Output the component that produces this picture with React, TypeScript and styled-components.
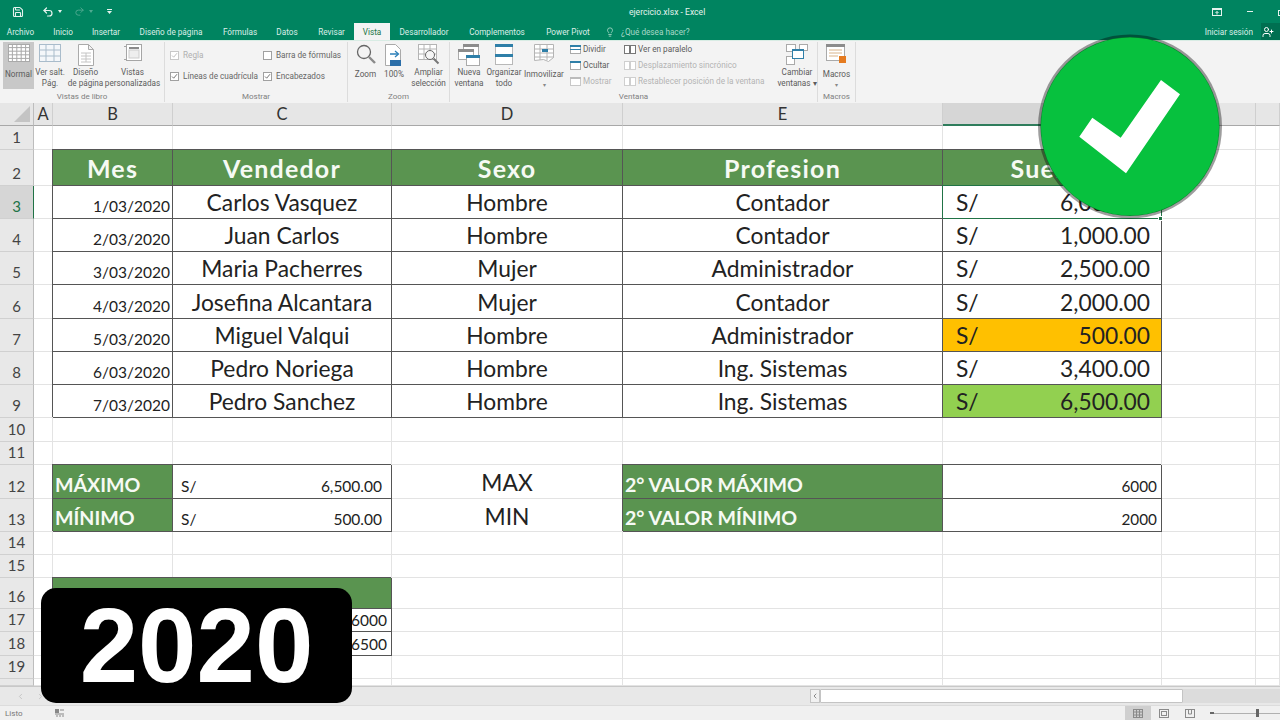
import React from 'react'
import styled, { createGlobalStyle } from 'styled-components'
import { Save, Undo2, Redo2, Lightbulb, UserPlus, ChevronLeft, ChevronRight } from 'lucide-react'

const GlobalStyle = createGlobalStyle`
  html, body { margin: 0; padding: 0; background: #fff; }
  * { box-sizing: border-box; }
`

const Page = styled.div`
  position: relative;
  width: 1280px;
  height: 720px;
  overflow: hidden;
  display: flex;
  flex-direction: column;
  font-family: Roboto, "Open Sans", sans-serif;
  color: #555;
`

const TitleBar = styled.div`
  height: 23px;
  background: #008460;
  color: #e6f3ee;
  display: flex;
  align-items: center;
  font-size: 8.6px;
`

const QuickAccess = styled.div`
  width: 629px;
  display: flex;
  align-items: center;
  padding-left: 12px;
`

const QuickIcon = styled.span<{ $ml?: number; $dim?: boolean }>`
  display: flex;
  margin-left: ${p => p.$ml ?? 0}px;
  opacity: ${p => (p.$dim ? 0.35 : 1)};
`

const Caret = styled.span<{ $ml: number; $dim?: boolean }>`
  width: 0;
  height: 0;
  margin-left: ${p => p.$ml}px;
  border: 2px solid transparent;
  border-top: 3px solid #e6f3ee;
  border-bottom: 0;
  opacity: ${p => (p.$dim ? 0.35 : 1)};
`

const WindowButtons = styled.div`
  margin-left: auto;
  display: flex;
  align-items: center;
  gap: 25px;
  margin-right: -7px;
`

const Minimize = styled.span`
  width: 6px;
  height: 1px;
  background: #e6f3ee;
`

const TabBar = styled.div`
  height: 17px;
  background: #008460;
  display: flex;
  align-items: stretch;
  font-size: 8.2px;
  color: #dcefe8;
`

const Tab = styled.div<{ $w: number; $active?: boolean }>`
  width: ${p => p.$w}px;
  display: flex;
  align-items: center;
  justify-content: center;
  white-space: nowrap;
  ${p => p.$active && 'background: #f3f3f3; color: #217346;'}
`

const Search = styled.div`
  margin-left: 5px;
  display: flex;
  align-items: center;
  gap: 6px;
  color: #a8d8c8;
`

const SignIn = styled.div`
  margin-left: auto;
  display: flex;
  align-items: center;
  white-space: nowrap;
  gap: 8px;
`

const UserBox = styled.div`
  width: 19px;
  height: 17px;
  background: #006f51;
  display: flex;
  align-items: center;
  padding-left: 1px;
`

const Ribbon = styled.div`
  height: 63px;
  background: #f3f3f3;
  display: flex;
  border-top: 1px solid #d8ece4;
  font-size: 8.2px;
  line-height: 11px;
  color: #5c5c5c;
`

const Group = styled.div<{ $w: number }>`
  width: ${p => p.$w}px;
  height: 60px;
  margin-top: 1px;
  display: flex;
  flex-direction: column;
  border-right: 1px solid #dcdcdc;
`

const GroupBody = styled.div<{ $left?: number }>`
  height: 48px;
  display: flex;
  padding-left: ${p => p.$left ?? 0}px;
`

const GroupLabel = styled.div`
  margin-top: 1px;
  text-align: center;
  font-size: 8px;
  color: #808080;
`

const LargeButton = styled.div<{ $w: number; $active?: boolean }>`
  width: ${p => p.$w}px;
  height: 47px;
  flex: none;
  display: flex;
  flex-direction: column;
  align-items: center;
  text-align: center;
  white-space: nowrap;
  background: ${p => (p.$active ? '#c8c8c8' : 'transparent')};
`

const IconSlot = styled.div`
  height: 27px;
  padding-top: 2px;
  display: flex;
  justify-content: center;
`

const ChecksGrid = styled.div`
  display: grid;
  grid-template-columns: 93px auto;
  grid-auto-rows: 21px;
  padding: 3px 0 0 5px;
`

const CheckRow = styled.div<{ $off?: boolean }>`
  display: flex;
  align-items: center;
  gap: 4px;
  white-space: nowrap;
  color: ${p => (p.$off ? '#b0b0b0' : '#666')};
`

const CheckBox = styled.span<{ $off?: boolean }>`
  width: 9px;
  height: 9px;
  flex: none;
  background: #fff;
  border: 1px solid ${p => (p.$off ? '#c8c8c8' : '#a0a0a0')};
  color: ${p => (p.$off ? '#c0c0c0' : '#777')};
  display: flex;
`

const SmallList = styled.div<{ $w: number; $left: number }>`
  width: ${p => p.$w}px;
  margin-left: ${p => p.$left}px;
  display: flex;
  flex-direction: column;
  gap: 5px;
  padding-top: 2px;
  flex: none;
`

const SmallRow = styled.div<{ $off?: boolean }>`
  height: 11px;
  display: flex;
  align-items: center;
  gap: 2px;
  white-space: nowrap;
  color: ${p => (p.$off ? '#b4b4b4' : '#5c5c5c')};
`

const Drop = styled.div`
  font-size: 6px;
  line-height: 9px;
  color: #888;
`

const Sheet = styled.div`
  height: 583px;
  display: grid;
  grid-template-columns: 34px 19px 120px 219px 231px 320px 219px 94px 24px;
  grid-template-rows: 23px 24px 36px 33px 33px 33px 34px 33px 33px 33px 24px 23px 34px 33px 23px 23px 31px 23px 24px 23px 7px;
  overflow: hidden;
  font-family: Lato, "Open Sans", sans-serif;
  color: #222;
  background: #fff;
`

const Corner = styled.div`
  background: #e6e6e6;
  border-right: 1px solid #bdbdbd;
  border-bottom: 1px solid #a8a8a8;
  position: relative;
`

const CornerMark = styled.div`
  position: absolute;
  right: 3px;
  bottom: 3px;
  width: 0;
  height: 0;
  border-left: 16px solid transparent;
  border-bottom: 16px solid #c4c4c4;
`

const ColHead = styled.div<{ $on?: boolean }>`
  background: ${p => (p.$on ? '#d6d6d6' : '#e6e6e6')};
  border-right: 1px solid #cfcfcf;
  border-bottom: ${p => (p.$on ? '2px solid #2f7d5c' : '1px solid #a8a8a8')};
  display: flex;
  align-items: center;
  justify-content: center;
  font-size: 16.5px;
  color: #333;
`

const RowHead = styled.div<{ $on?: boolean }>`
  background: ${p => (p.$on ? '#d6d6d6' : '#e8e8e8')};
  border-right: ${p => (p.$on ? '1px solid #217346' : '1px solid #bdbdbd')};
  border-bottom: 1px solid #d0d0d0;
  display: flex;
  align-items: flex-end;
  justify-content: center;
  padding-bottom: 3px;
  font-size: 15px;
  color: ${p => (p.$on ? '#217346' : '#444')};
`

const Cell = styled.div<{
  $span?: number
  $boxed?: boolean
  $bg?: string
  $align?: string
  $v?: string
  $size?: number
  $bold?: boolean
  $color?: string
  $pad?: string
  $selected?: boolean
}>`
  position: relative;
  grid-column: span ${p => p.$span ?? 1};
  display: flex;
  white-space: nowrap;
  min-width: 0;
  overflow: hidden;
  justify-content: ${p => p.$align ?? 'center'};
  align-items: ${p => p.$v ?? 'center'};
  padding: ${p => p.$pad ?? '0'};
  font-size: ${p => p.$size ?? 22.8}px;
  font-weight: ${p => (p.$bold ? 700 : 400)};
  color: ${p => p.$color ?? '#222'};
  background: ${p => p.$bg ?? 'transparent'};
  border-right: 1px solid ${p => (p.$boxed ? '#555' : '#e3e3e3')};
  border-bottom: 1px solid ${p => (p.$boxed ? '#555' : '#e3e3e3')};
  ${p => p.$boxed && 'box-shadow: -1px -1px 0 #555;'}
  ${p => p.$selected && 'z-index: 1; box-shadow: -1px -1px 0 #217346; border-color: #217346;'}
`

const HeadCell = styled(Cell).attrs({ $bold: true, $boxed: true, $bg: '#5a9450', $color: '#f6faf4', $size: 25 })`
  letter-spacing: 1.2px;
`

const GreenLabel = styled(Cell).attrs({ $bold: true, $boxed: true, $bg: '#5a9450', $color: '#f6faf4', $size: 19.6, $align: 'flex-start', $v: 'flex-end', $pad: '0 0 2px 2px' })``

const ResizeHandle = styled.div`
  position: absolute;
  left: 1158px;
  top: 216px;
  width: 5px;
  height: 5px;
  background: #217346;
  border: 1px solid #fff;
  z-index: 2;
`

const SheetBar = styled.div`
  height: 19px;
  background: #e8e8e8;
  border-top: 1px solid #c8c8c8;
  display: flex;
  align-items: center;
  color: #bbb;
  padding-left: 16px;
  gap: 11px;
`

const ScrollTrack = styled.div`
  margin-left: auto;
  width: 470px;
  height: 14px;
  display: flex;
  align-items: stretch;
  background: #dcdcdc;
`

const ScrollArrow = styled.div`
  width: 10px;
  background: #f1f1f1;
  border: 1px solid #c4c4c4;
  display: flex;
  align-items: center;
  justify-content: center;
  color: #555;
`

const ScrollThumb = styled.div`
  width: 363px;
  background: #fff;
  border: 1px solid #c4c4c4;
  border-radius: 1px;
`

const StatusBar = styled.div`
  height: 15px;
  background: #f0f0f0;
  border-top: 1px solid #dcdcdc;
  display: flex;
  align-items: center;
  padding-left: 5px;
  font-size: 8px;
  color: #777;
`

const StatusMacro = styled.span`
  display: flex;
  margin-left: 33px;
`

const ViewButton = styled.div<{ $active?: boolean }>`
  width: 26px;
  height: 14px;
  display: flex;
  align-items: center;
  justify-content: center;
  background: ${p => (p.$active ? '#cfcfcf' : 'transparent')};
`

const ViewButtons = styled.div`
  margin-left: auto;
  display: flex;
  align-items: center;
`

const ZoomSlider = styled.div`
  position: relative;
  width: 66px;
  margin-left: 11px;
  height: 1px;
  background: #b0b0b0;
`

const ZoomMinus = styled.span`
  position: absolute;
  left: -4px;
  top: -1px;
  width: 4px;
  height: 2px;
  background: #666;
`

const ZoomThumb = styled.span`
  position: absolute;
  left: 42px;
  top: -4px;
  width: 3px;
  height: 8px;
  background: #666;
`

const YearBadge = styled.div`
  position: absolute;
  left: 41px;
  top: 588px;
  width: 311px;
  height: 115px;
  border-radius: 15px;
  background: #000;
  color: #fff;
  display: flex;
  align-items: center;
  justify-content: center;
  font-family: "Liberation Sans", Arial, sans-serif;
  font-weight: 700;
  font-size: 105px;
  line-height: 1;
`

const CheckMark = styled.svg`
  position: absolute;
  left: 1036px;
  top: 33px;
  z-index: 3;
`

// ribbon drawings
const NormalIcon = () => (
  <svg width="22" height="18" viewBox="0 0 22 18">
    <rect x=".5" y=".5" width="21" height="17" fill="#fff" stroke="#a9a9a9" />
    {[1, 2, 3, 4].map(i => <line key={i} x1="0" x2="22" y1={(i * 18) / 5} y2={(i * 18) / 5} stroke="#a9a9a9" />)}
    {[1, 2, 3, 4].map(i => <line key={i} y1="0" y2="18" x1={(i * 22) / 5} x2={(i * 22) / 5} stroke="#a9a9a9" />)}
  </svg>
)

const PageBreakIcon = () => (
  <svg width="22" height="18" viewBox="0 0 22 18" fill="#f4f7fa" stroke="#a9bccb">
    <rect x=".5" y=".5" width="21" height="17" />
    <path d="M0 6h22M0 12h22M7 0v18M15 0v18" />
  </svg>
)

const PageIcon = () => (
  <svg width="16" height="22" viewBox="0 0 16 22" fill="#fff" stroke="#aaa">
    <path d="M.5.5h10l5 5v16H.5zM10.5.5v5h5" />
    <path d="M3 9h10M3 12h10M3 15h10M3 18h10M8 9v9" stroke="#c4c4c4" />
  </svg>
)

const CustomViewIcon = () => (
  <svg width="20" height="18" viewBox="0 0 20 18" fill="none" stroke="#a6a6a6">
    <path d="M3.5 2.5H1M3.5 15.5H1" />
    <rect x="3.5" y=".5" width="15" height="16" fill="#fff" />
    <path d="M6 4h10" stroke="#8a8a8a" strokeWidth="2" />
    <rect x="6" y="6" width="10" height="8" fill="#eee" stroke="#ccc" />
  </svg>
)

const Loupe = () => (
  <svg width="20" height="20" viewBox="0 0 20 20" fill="none" stroke="#666">
    <circle cx="8" cy="8" r="6.5" strokeWidth="1.3" />
    <path d="M13 13l6 6" strokeWidth="2.4" stroke="#8a8a8a" />
  </svg>
)

const HundredIcon = () => (
  <svg width="18" height="22" viewBox="0 0 18 22" fill="#fff" stroke="#aaa">
    <path d="M.5.5h10l5 5v16H.5z" />
    <path d="M5 10h8" stroke="#2b7fb8" strokeWidth="1.5" />
    <path d="M10 7l3.5 3-3.5 3" fill="none" stroke="#2b7fb8" strokeWidth="1.3" />
    <rect x="5" y="16" width="11" height="6" fill="#2b6ea8" stroke="none" />
  </svg>
)

const FitIcon = () => (
  <svg width="22" height="21" viewBox="0 0 22 21" fill="none" stroke="#b4b4b4">
    <rect x=".5" y=".5" width="18" height="15" fill="#fff" />
    <path d="M0 5h18M0 10h18M6 0v15M12 0v15" />
    <circle cx="12" cy="11" r="4.5" stroke="#666" fill="#f6f6f6" />
    <path d="M15.5 14.5l5 5" stroke="#777" strokeWidth="2" />
  </svg>
)

const NewWindowIcon = () => (
  <svg width="22" height="22" viewBox="0 0 22 22" fill="#fff">
    <rect x="5.5" y=".5" width="15" height="12" stroke="#aaa" />
    <rect x="5" y="0" width="16" height="3" fill="#8c8c8c" />
    <rect x=".5" y="5.5" width="15" height="10" stroke="#aaa" />
    <rect x="0" y="5" width="16" height="3" fill="#8c8c8c" />
    <rect x="8.5" y="11.5" width="13" height="10" stroke="#aaa" />
    <rect x="8" y="11" width="14" height="3" fill="#2f7fa8" />
  </svg>
)

const ArrangeIcon = () => (
  <svg width="18" height="21" viewBox="0 0 18 21" fill="#fff">
    <rect x=".5" y=".5" width="17" height="20" stroke="#b8b8b8" />
    <rect x="0" y="0" width="18" height="3" fill="#2f7fa8" />
    <rect x="0" y="10" width="18" height="3" fill="#2f7fa8" />
  </svg>
)

const FreezeIcon = () => (
  <svg width="20" height="19" viewBox="0 0 20 19" fill="#fff" stroke="#b4b4b4">
    <path d="M.5.5h19v13l-5 4-5-2-9 1z" />
    <path d="M0 5h20M0 9h20M0 13h20M6 0v16M13 0v16" />
    <rect x="8" y="5" width="6" height="3" fill="#2f7fa8" stroke="none" />
  </svg>
)

const PaneIcon = ({ top, off, mid }: { top?: boolean; off?: boolean; mid?: boolean }) => (
  <svg width="11" height="9" viewBox="0 0 11 9" fill="#fff" stroke={off ? '#c8c8c8' : '#aaa'}>
    <rect x=".5" y=".5" width="10" height="8" />
    {top && <path d="M0 1h11" stroke={off ? '#bbb' : '#2f7fa8'} strokeWidth="2" />}
    {mid && <path d="M0 4.5h11" stroke="#2f7fa8" />}
  </svg>
)

const CompareIcon = ({ off }: { off?: boolean }) => (
  <svg width="12" height="9" viewBox="0 0 12 9" fill="#fff" stroke={off ? '#cfcfcf' : '#777'}>
    <rect x=".5" y=".5" width="5" height="8" />
    <rect x="6.5" y=".5" width="5" height="8" />
  </svg>
)

const SwitchIcon = () => (
  <svg width="22" height="21" viewBox="0 0 22 21" fill="#fff">
    <rect x=".5" y=".5" width="9" height="7" stroke="#aaa" />
    <rect x="13.5" y=".5" width="8" height="6" stroke="#aaa" />
    <rect x=".5" y="12.5" width="8" height="8" stroke="#aaa" />
    <rect x="6.5" y="5.5" width="11" height="9" stroke="#2f7fa8" />
    <rect x="6" y="5" width="12" height="2" fill="#2f7fa8" />
  </svg>
)

const MacroIcon = () => (
  <svg width="22" height="21" viewBox="0 0 22 21" fill="#fff">
    <rect x=".5" y=".5" width="18" height="16" stroke="#aaa" />
    <rect x="0" y="0" width="19" height="3" fill="#8c8c8c" />
    <path d="M3 6h13M3 9h13M3 12h9" stroke="#d9b48a" />
    <rect x="13" y="12" width="7" height="7" fill="#e57b20" />
  </svg>
)

const Tick = () => (
  <svg width="7" height="7" viewBox="0 0 7 7" fill="none" stroke="currentColor" strokeWidth="1">
    <path d="M1 3.5l1.7 1.7L6 1.2" />
  </svg>
)

const StatusMacroIcon = () => (
  <svg width="9" height="9" viewBox="0 0 9 9" fill="none" stroke="#888">
    <rect x=".5" y=".5" width="3" height="3" fill="#888" />
    <path d="M5 1h4M0 5h9M2 8V6M5 8V6M8 8V6" />
  </svg>
)

const ViewGlyph = ({ kind }: { kind: string }) => (
  <svg width="10" height="9" viewBox="0 0 10 9" fill="none" stroke="#8a8a8a">
    <rect x=".5" y=".5" width="9" height="8" />
    {kind === 'normal' && <path d="M3.5 0v9M6.5 0v9M0 3h10M0 6h10" />}
    {kind === 'layout' && <rect x="2.5" y="2.5" width="5" height="4" />}
    {kind === 'break' && <path d="M3.5 0v5h3V0" />}
  </svg>
)

const CustomizeGlyph = () => (
  <svg width="5" height="5" viewBox="0 0 5 5" fill="#e6f3ee">
    <rect x="0" y="0" width="5" height="1" />
    <path d="M0 2h5L2.5 5z" />
  </svg>
)

const RibbonDisplayGlyph = () => (
  <svg width="10" height="8" viewBox="0 0 10 8" fill="none" stroke="#e6f3ee">
    <rect x=".5" y=".5" width="9" height="7" />
    <path d="M0 1.5h10" />
    <path d="M5 6.5v-3M3.5 5L5 3.5 6.5 5" />
  </svg>
)

const RestoreGlyph = () => (
  <svg width="9" height="8" viewBox="0 0 9 8" fill="none" stroke="#e6f3ee">
    <path d="M2.5 2V.5h6v5H7" />
    <rect x=".5" y="2.5" width="6" height="5" />
  </svg>
)

const workbookViews = [
  { w: 31, lines: ['Normal'], icon: <NormalIcon />, active: true },
  { w: 32, lines: ['Ver salt.', 'Pág.'], icon: <PageBreakIcon /> },
  { w: 39, lines: ['Diseño', 'de página'], icon: <PageIcon /> },
  { w: 55, lines: ['Vistas', 'personalizadas'], icon: <CustomViewIcon /> },
]

const zoomButtons = [
  { w: 29, lines: ['Zoom'], icon: <Loupe /> },
  { w: 28, lines: ['100%'], icon: <HundredIcon /> },
  { w: 41, lines: ['Ampliar', 'selección'], icon: <FitIcon /> },
]

const columns = ['B', 'C', 'D', 'E', 'F', 'G', '']

const staff = [
  { row: 3, date: '1/03/2020', name: 'Carlos Vasquez', sex: 'Hombre', job: 'Contador', pay: '6,000.00' },
  { row: 4, date: '2/03/2020', name: 'Juan Carlos', sex: 'Hombre', job: 'Contador', pay: '1,000.00' },
  { row: 5, date: '3/03/2020', name: 'Maria Pacherres', sex: 'Mujer', job: 'Administrador', pay: '2,500.00' },
  { row: 6, date: '4/03/2020', name: 'Josefina Alcantara', sex: 'Mujer', job: 'Contador', pay: '2,000.00' },
  { row: 7, date: '5/03/2020', name: 'Miguel Valqui', sex: 'Hombre', job: 'Administrador', pay: '500.00', bg: '#ffc000' },
  { row: 8, date: '6/03/2020', name: 'Pedro Noriega', sex: 'Hombre', job: 'Ing. Sistemas', pay: '3,400.00' },
  { row: 9, date: '7/03/2020', name: 'Pedro Sanchez', sex: 'Hombre', job: 'Ing. Sistemas', pay: '6,500.00', bg: '#92d050' },
]

const Blank = ({ n = 1 }: { n?: number }) => (
  <>
    {Array.from({ length: n }, (_, i) => <Cell key={i} />)}
  </>
)

const ButtonLabel = ({ lines }: { lines: string[] }) => (
  <>
    {lines.map(l => <div key={l}>{l}</div>)}
  </>
)

const App = () => (
  <Page>
    <GlobalStyle />
    <TitleBar>
      <QuickAccess>
        <QuickIcon><Save size={12} strokeWidth={2.2} /></QuickIcon>
        <QuickIcon $ml={18}><Undo2 size={12} strokeWidth={2.4} /></QuickIcon>
        <Caret $ml={4} />
        <QuickIcon $ml={12} $dim><Redo2 size={11} /></QuickIcon>
        <Caret $ml={4} $dim />
        <QuickIcon $ml={14}><CustomizeGlyph /></QuickIcon>
      </QuickAccess>
      <span>ejercicio.xlsx - Excel</span>
      <WindowButtons>
        <RibbonDisplayGlyph />
        <Minimize />
        <RestoreGlyph />
      </WindowButtons>
    </TitleBar>
    <TabBar>
      <Tab $w={41}>Archivo</Tab>
      <Tab $w={44}>Inicio</Tab>
      <Tab $w={42}>Insertar</Tab>
      <Tab $w={88}>Diseño de página</Tab>
      <Tab $w={50}>Fórmulas</Tab>
      <Tab $w={44}>Datos</Tab>
      <Tab $w={45}>Revisar</Tab>
      <Tab $w={36} $active>Vista</Tab>
      <Tab $w={68}>Desarrollador</Tab>
      <Tab $w={78}>Complementos</Tab>
      <Tab $w={64}>Power Pivot</Tab>
      <Search>
        <Lightbulb size={10} />
        ¿Qué desea hacer?
      </Search>
      <SignIn>
        Iniciar sesión
        <UserBox><UserPlus size={12} color="#fff" /></UserBox>
      </SignIn>
    </TabBar>
    <Ribbon>
      <Group $w={165}>
        <GroupBody $left={3}>
          {workbookViews.map(b => (
            <LargeButton key={b.lines[0]} $w={b.w} $active={b.active}>
              <IconSlot>{b.icon}</IconSlot>
              <ButtonLabel lines={b.lines} />
            </LargeButton>
          ))}
        </GroupBody>
        <GroupLabel>Vistas de libro</GroupLabel>
      </Group>
      <Group $w={183}>
        <GroupBody>
          <ChecksGrid>
            <CheckRow $off><CheckBox $off><Tick /></CheckBox>Regla</CheckRow>
            <CheckRow><CheckBox />Barra de fórmulas</CheckRow>
            <CheckRow><CheckBox><Tick /></CheckBox>Líneas de cuadrícula</CheckRow>
            <CheckRow><CheckBox><Tick /></CheckBox>Encabezados</CheckRow>
          </ChecksGrid>
        </GroupBody>
        <GroupLabel>Mostrar</GroupLabel>
      </Group>
      <Group $w={102}>
        <GroupBody $left={3}>
          {zoomButtons.map(b => (
            <LargeButton key={b.lines[0]} $w={b.w}>
              <IconSlot>{b.icon}</IconSlot>
              <ButtonLabel lines={b.lines} />
            </LargeButton>
          ))}
        </GroupBody>
        <GroupLabel>Zoom</GroupLabel>
      </Group>
      <Group $w={368}>
        <GroupBody $left={2}>
          <LargeButton $w={34}>
            <IconSlot><NewWindowIcon /></IconSlot>
            <ButtonLabel lines={['Nueva', 'ventana']} />
          </LargeButton>
          <LargeButton $w={36}>
            <IconSlot><ArrangeIcon /></IconSlot>
            <ButtonLabel lines={['Organizar', 'todo']} />
          </LargeButton>
          <LargeButton $w={44}>
            <IconSlot><FreezeIcon /></IconSlot>
            <ButtonLabel lines={['Inmovilizar']} />
            <Drop>▾</Drop>
          </LargeButton>
          <SmallList $w={54} $left={4}>
            <SmallRow><PaneIcon top mid />Dividir</SmallRow>
            <SmallRow><PaneIcon top />Ocultar</SmallRow>
            <SmallRow $off><PaneIcon top off />Mostrar</SmallRow>
          </SmallList>
          <SmallList $w={151} $left={0}>
            <SmallRow><CompareIcon />Ver en paralelo</SmallRow>
            <SmallRow $off><CompareIcon off />Desplazamiento sincrónico</SmallRow>
            <SmallRow $off><CompareIcon off />Restablecer posición de la ventana</SmallRow>
          </SmallList>
          <LargeButton $w={44}>
            <IconSlot><SwitchIcon /></IconSlot>
            <ButtonLabel lines={['Cambiar', 'ventanas ▾']} />
          </LargeButton>
        </GroupBody>
        <GroupLabel>Ventana</GroupLabel>
      </Group>
      <Group $w={38}>
        <GroupBody>
          <LargeButton $w={37}>
            <IconSlot><MacroIcon /></IconSlot>
            <ButtonLabel lines={['Macros']} />
            <Drop>▾</Drop>
          </LargeButton>
        </GroupBody>
        <GroupLabel>Macros</GroupLabel>
      </Group>
    </Ribbon>
    <Sheet>
      <Corner><CornerMark /></Corner>
      <ColHead>A</ColHead>
      {columns.map((c, i) => <ColHead key={i} $on={c === 'F'}>{c}</ColHead>)}

      <RowHead>1</RowHead>
      <Blank n={8} />

      <RowHead>2</RowHead>
      <Cell />
      <HeadCell>Mes</HeadCell>
      <HeadCell>Vendedor</HeadCell>
      <HeadCell>Sexo</HeadCell>
      <HeadCell>Profesion</HeadCell>
      <HeadCell>Sueldo</HeadCell>
      <Blank n={2} />

      {staff.map(p => (
        <React.Fragment key={p.row}>
          <RowHead $on={p.row === 3}>{p.row}</RowHead>
          <Cell />
          <Cell $boxed $align="flex-end" $v="flex-end" $size={15.5} $pad="0 2px 3px 0">{p.date}</Cell>
          <Cell $boxed>{p.name}</Cell>
          <Cell $boxed>{p.sex}</Cell>
          <Cell $boxed>{p.job}</Cell>
          <Cell $boxed $selected={p.row === 3} $bg={p.bg} $align="space-between" $pad="0 11px 0 13px">
            <span>S/</span>
            <span>{p.pay}</span>
          </Cell>
          <Blank n={2} />
        </React.Fragment>
      ))}

      <RowHead>10</RowHead>
      <Blank n={8} />
      <RowHead>11</RowHead>
      <Blank n={8} />

      <RowHead>12</RowHead>
      <Cell />
      <GreenLabel>MÁXIMO</GreenLabel>
      <Cell $boxed $size={15.5} $align="space-between" $v="flex-end" $pad="0 9px 3px 8px"><span>S/</span><span>6,500.00</span></Cell>
      <Cell $v="flex-start" $pad="3px 0 0 0">MAX</Cell>
      <GreenLabel>2° VALOR MÁXIMO</GreenLabel>
      <Cell $boxed $size={15.3} $align="flex-end" $v="flex-end" $pad="0 4px 3px 0">6000</Cell>
      <Blank n={2} />

      <RowHead>13</RowHead>
      <Cell />
      <GreenLabel>MÍNIMO</GreenLabel>
      <Cell $boxed $size={15.5} $align="space-between" $v="flex-end" $pad="0 9px 3px 8px"><span>S/</span><span>500.00</span></Cell>
      <Cell $v="flex-start" $pad="3px 0 0 0">MIN</Cell>
      <GreenLabel>2° VALOR MÍNIMO</GreenLabel>
      <Cell $boxed $size={15.3} $align="flex-end" $v="flex-end" $pad="0 4px 3px 0">2000</Cell>
      <Blank n={2} />

      <RowHead>14</RowHead>
      <Blank n={8} />
      <RowHead>15</RowHead>
      <Blank n={8} />

      <RowHead>16</RowHead>
      <Cell />
      <Cell $span={2} $boxed $bg="#5a9450" $color="#f6faf4" $bold $size={22} $pad="8px 0 0 0">Hallar el k-ésimo valor</Cell>
      <Blank n={5} />

      <RowHead>17</RowHead>
      <Cell />
      <Cell $boxed />
      <Cell $boxed $size={15.5} $align="flex-end" $pad="0 4px 0 0">6000</Cell>
      <Blank n={5} />

      <RowHead>18</RowHead>
      <Cell />
      <Cell $boxed />
      <Cell $boxed $size={15.5} $align="flex-end" $pad="0 4px 0 0">6500</Cell>
      <Blank n={5} />

      <RowHead>19</RowHead>
      <Blank n={8} />
      <RowHead />
      <Blank n={8} />
    </Sheet>
    <SheetBar>
      <ChevronLeft size={9} />
      <ChevronRight size={9} />
      <ScrollTrack>
        <ScrollArrow><ChevronLeft size={8} /></ScrollArrow>
        <ScrollThumb />
      </ScrollTrack>
    </SheetBar>
    <StatusBar>
      Listo
      <StatusMacro><StatusMacroIcon /></StatusMacro>
      <ViewButtons>
        <ViewButton $active><ViewGlyph kind="normal" /></ViewButton>
        <ViewButton><ViewGlyph kind="layout" /></ViewButton>
        <ViewButton><ViewGlyph kind="break" /></ViewButton>
        <ZoomSlider>
          <ZoomMinus />
          <ZoomThumb />
        </ZoomSlider>
      </ViewButtons>
    </StatusBar>
    <ResizeHandle />
    <YearBadge>2020</YearBadge>
    <CheckMark width="188" height="188" viewBox="1036 33 188 188">
      <circle cx="1130" cy="126.5" r="89.5" fill="#07c13e" />
      <circle cx="1130" cy="126.5" r="90.5" fill="none" stroke="rgba(0,0,0,0.38)" strokeWidth="3" />
      <polygon points="1161,80 1180,94.3 1126,173.3 1079.3,136.7 1092.3,117.7 1120.7,137.7" fill="#fff" />
    </CheckMark>
  </Page>
)

export default App
